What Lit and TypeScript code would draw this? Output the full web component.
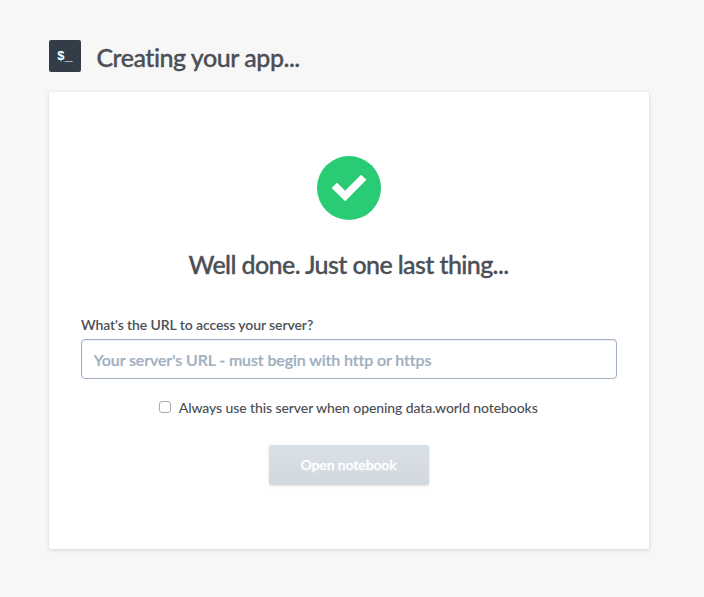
import { LitElement, html, css } from "lit";
import { customElement } from "lit/decorators.js";

@customElement("app-root")
export class AppRoot extends LitElement {
  static styles = css`
    :host {
      display: block;
      box-sizing: border-box;
      height: 597px;
      padding: 40px 55px 48px 49px;
      background: #f7f7f7;
      color: #4b4f56;
      font-family: Lato, "Liberation Sans", sans-serif;
    }
    * { box-sizing: border-box; }
    header { display: flex; height: 52px; }
    .logo {
      width: 32px;
      height: 32px;
      padding-left: 8px;
      border-radius: 2px;
      background: #323d48;
      color: #fff;
      font: 700 13px/33px "Liberation Mono", monospace;
      white-space: nowrap;
    }
    h1, h2 {
      margin: 0;
      font-weight: 500;
      font-size: 25px;
      line-height: 34px;
      white-space: nowrap;
      -webkit-text-stroke: 0.35px currentColor;
    }
    h1 { margin-left: 15.4px; letter-spacing: -0.47px; }
    .card {
      display: flex;
      flex-direction: column;
      align-items: center;
      width: 600px;
      height: 457px;
      padding: 64px 32px;
      border-radius: 2px;
      background: #fff;
      box-shadow: 0 1px 4px rgba(0, 0, 0, 0.15);
    }
    .check { width: 64px; height: 64px; flex: none; }
    h2 { margin: 27px 1px 0 0; letter-spacing: -0.6px; }
    .label {
      align-self: stretch;
      margin-top: 34px;
      font-size: 14px;
      font-weight: 600;
      letter-spacing: -0.1px;
      line-height: 20px;
      height: 24px;
    }
    .url {
      width: 536px;
      height: 40px;
      flex: none;
      padding: 1px 11.5px 0;
      border: 1px solid #a0afc0;
      border-radius: 4px;
      background: #fff;
      box-shadow: inset 0 1px 1px rgba(0, 0, 0, 0.07);
      font: 600 16px Lato, sans-serif;
      letter-spacing: -0.12px;
      outline: none;
    }
    .url::placeholder { color: #a0afbf; opacity: 1; -webkit-text-stroke: 0.2px #a0afbf; }
    .remember {
      display: flex;
      align-items: center;
      margin: 19px 1.5px 0 0;
      height: 20px;
      font-size: 14px;
      font-weight: 500;
      letter-spacing: -0.09px;
      white-space: nowrap;
    }
    .remember span { margin-top: -2px; }
    .box {
      appearance: none;
      width: 12px;
      height: 12px;
      margin: -2px 8px 0 0;
      border: 1px solid #aaa;
      border-radius: 3px;
      background: #fff;
    }
    button {
      width: 160px;
      height: 40px;
      flex: none;
      margin-top: 27px;
      padding: 0 1px 2px 0;
      border: 0;
      border-radius: 2px;
      background: linear-gradient(#dae0e8, #d3d8df);
      box-shadow: 0 1px 3px rgba(0, 0, 0, 0.13);
      color: #fff;
      font: 600 14px Lato, sans-serif;
      letter-spacing: -0.1px;
      -webkit-text-stroke: 0.3px #fff;
    }
  `;

  render() {
    return html`
      <header>
        <div class="logo">$_</div>
        <h1>Creating your app...</h1>
      </header>
      <main class="card">
        <svg class="check" viewBox="0 0 64 64">
          <circle cx="32" cy="32" r="32" fill="#2acb75" />
          <path d="M14.6 32 20 26.8l8.2 8L44 18.7l5.4 5.1-21.2 21.4z" fill="#fff" />
        </svg>
        <h2>Well done. Just one last thing...</h2>
        <label class="label" for="url"><span>What's the URL to access your server?</span></label>
        <input id="url" class="url" placeholder="Your server's URL - must begin with http or https" />
        <label class="remember">
          <input class="box" type="checkbox" />
          <span>Always use this server when opening data.world notebooks</span>
        </label>
        <button disabled><span>Open notebook</span></button>
      </main>
    `;
  }
}
